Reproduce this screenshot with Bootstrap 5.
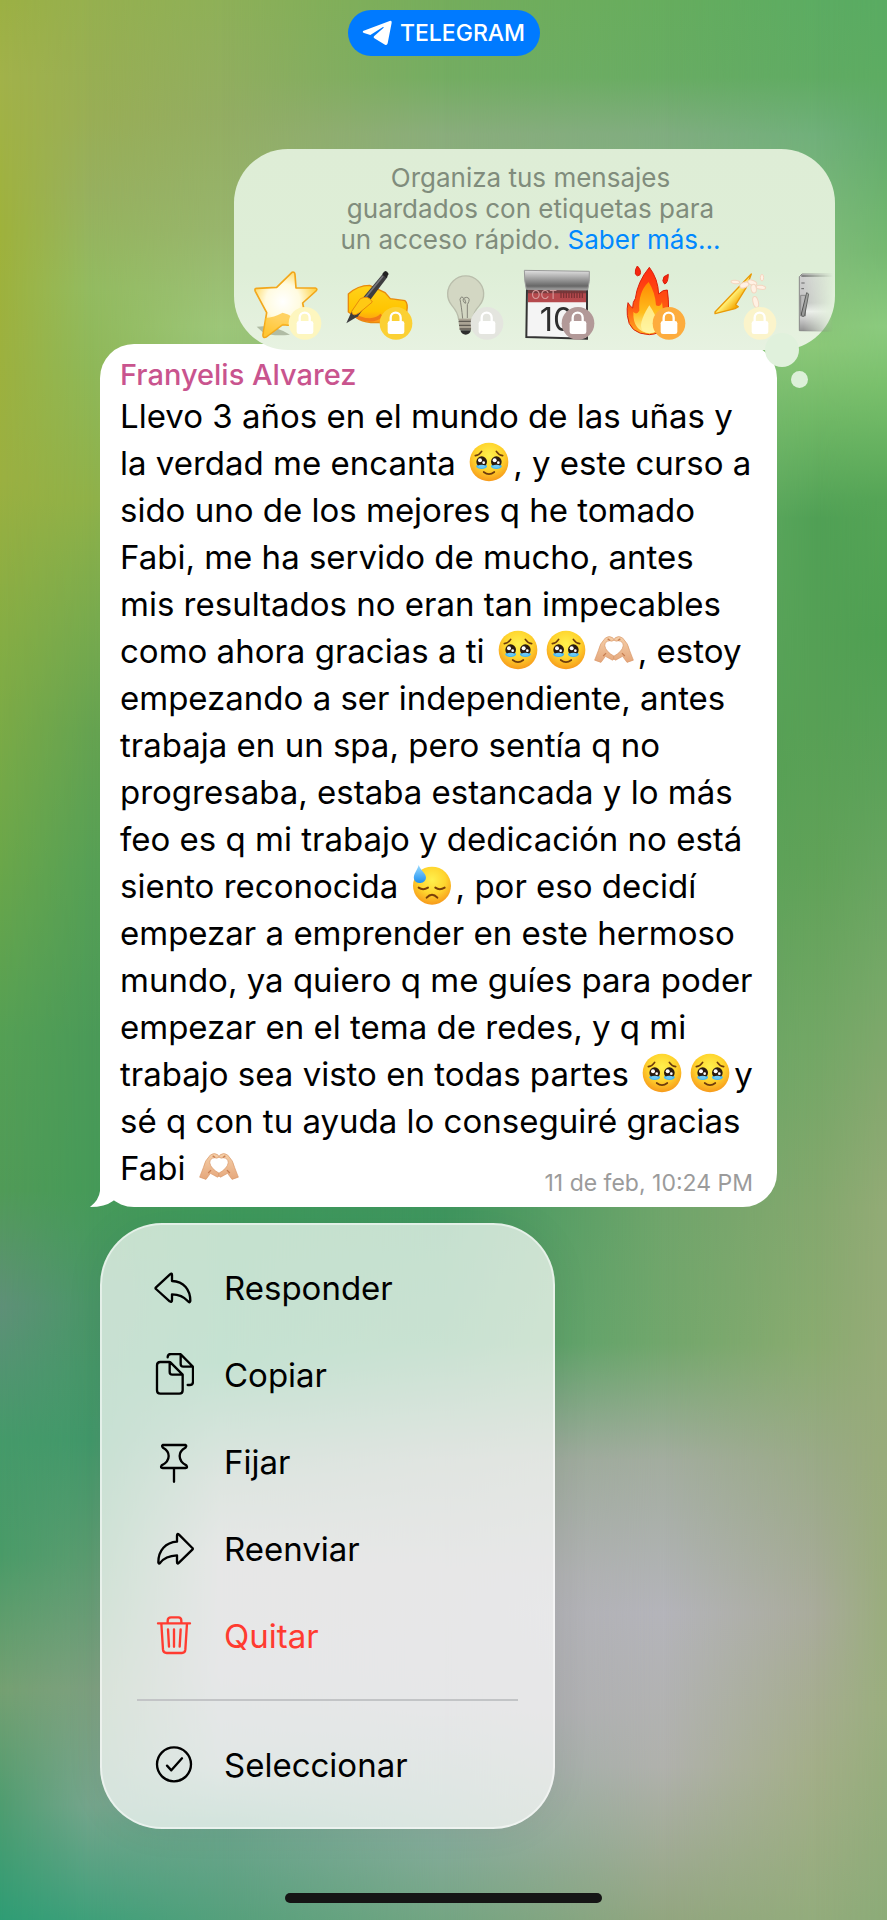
<!DOCTYPE html>
<html lang="es">
<head>
<meta charset="utf-8">
<meta name="viewport" content="width=device-width, initial-scale=1">
<title>Telegram</title>
<link href="https://cdn.jsdelivr.net/npm/bootstrap@5.3.0/dist/css/bootstrap.min.css" rel="stylesheet">
<style>
  body { font-family: Inter, "Liberation Sans", sans-serif; color: #000; background: #55a055; }
  .screen { z-index: 0; }
  /* Blurred wallpaper: vertical gradients cross-faded from left to right */
  .wall { z-index: -1; }
  .wall div { position: absolute; inset: 0; }
  .w0 { background: linear-gradient(#9cb044 0%, #a2b24a 4%, #9fb23c 12%, #9bb041 25%, #86ad44 33%, #6ba74a 45%, #55a055 54%, #519b58 62%, #5f9078 68%, #459a6a 75%, #4a9b68 81%, #75a072 88%, #4f9d70 94%, #2f9d75 100%); }
  .w1 { background: linear-gradient(#96b04f 0%, #99ae55 6%, #97b05e 10%, #93bb60 15%, #8fb858 19%, #90b148 26%, #7aab4d 32%, #66a350 38%, #57a055 45%, #4b9a58 54%, #469a58 62%, #4b9668 68%, #42986a 75%, #5a9c70 81%, #7da07f 88%, #75a58c 94%, #3fa07a 100%);
        -webkit-mask-image: linear-gradient(to right, transparent 0%, #000 10%); }
  .w2 { background: linear-gradient(#8eb058 0%, #93ad62 6%, #98b56c 12%, #9dc679 17%, #57a055 40%, #3f9a5c 63%, #3f9e6a 71%, #8fa898 77%, #adb0ae 81%, #acaeb2 87%, #9cb0aa 92%, #6ca58d 95%, #55a07c 100%);
        -webkit-mask-image: linear-gradient(to right, transparent 10%, #000 25%); }
  .w3 { background: linear-gradient(#75ad5c 0%, #74ad62 4%, #8aad7c 7%, #8ab878 17%, #57a055 40%, #3f975f 63%, #4b9d68 70%, #98a79a 76%, #afafb0 82%, #acadb2 89%, #84ab99 96%, #74a583 100%);
        -webkit-mask-image: linear-gradient(to right, transparent 25%, #000 50%); }
  .w4 { background: linear-gradient(#66ad5e 0%, #68ac63 4%, #80ad80 7%, #86c07a 17%, #50a055 40%, #70a56b 63%, #72a76c 70%, #a3ad9f 76%, #b4b4ba 84%, #b0b1ac 92%, #93a680 100%);
        -webkit-mask-image: linear-gradient(to right, transparent 50%, #000 75%); }
  .w5 { background: linear-gradient(#5cac62 0%, #60ab63 4%, #70b07a 7%, #86c07a 15%, #8bc878 18%, #6fb765 22%, #50a055 27%, #58a055 38%, #60a258 45%, #72a765 54%, #84a86e 63%, #8aab70 70%, #9aaa87 76%, #a9ab9b 84%, #a3ae88 92%, #93ac7c 100%);
        -webkit-mask-image: linear-gradient(to right, transparent 75%, #000 92%); }
  .w6 { background: linear-gradient(#59ab62 0%, #5dac62 4%, #63ac6c 7%, #74b870 13%, #8bca7e 17%, #7ac06c 20%, #55a556 26%, #4fa052 33%, #5da25a 41%, #76a868 51%, #86a86f 57%, #93ab76 63%, #98ab7a 76%, #9aae7e 89%, #8cab78 100%);
        -webkit-mask-image: linear-gradient(to right, transparent 92%, #000 100%); }

  .app-pill { margin-top: 10px; height: 46px; width: 192px; background: #007aff; font-size: 23px; font-weight: 500; line-height: 46px; }
  .tags-popup { margin: 93px 52px -6px 234px; padding: 13px 2px 8px 10px; border-radius: 54px; z-index: 2;
    background: linear-gradient(#deedd6, #deeed7 60%, #e7f2e1); }
  .tags-popup p { padding-right: 16px; font-size: 26px; line-height: 31px; color: #808c7c; }
  .tags-popup a { color: #08f; }
  .tag-row { margin-top: 7px; -webkit-mask-image: linear-gradient(to right, #000 95%, transparent 100%); }
  .tag-btn { width: 91px; height: 80px; }
  .tag-btn svg { width: 91px; height: 80px; display: block; }
  .thought { width: 34px; height: 34px; right: 36px; bottom: -17px; background: #e0f1dc; }
  .thought-dot { width: 17px; height: 17px; right: 27px; bottom: -38px; background: #dcf0d8; }

  .bubble { margin: 0 110px 0 100px; padding: 12px 20px 15px 20px; border-radius: 34px; background: #fff; z-index: 1; }
  .sender { font-size: 29px; line-height: 37px; font-weight: 500; color: #c9548e; }
  .msg { font-size: 33px; line-height: 47px; white-space: nowrap; }
  .emo { width: 40px; height: 40px; margin: 0 4px; vertical-align: -7px; }
  .stamp { right: 24px; bottom: 9px; font-size: 23px; line-height: 30px; color: #9b9b9b; }
  .tail { left: -10px; bottom: 0; width: 40px; height: 34px; }

  .actions { margin: 16px 0 0 100px; width: 455px; padding: 19px 0; border: 2px solid rgba(255,255,255,.5); border-radius: 62px; background: rgba(255,255,255,.7); box-shadow: 0 0 40px rgba(0,0,0,.06); }
  .actions button { height: 87px; padding: 0 0 0 52px; gap: 30px; font-size: 33px; line-height: 44px; color: #000; }
  .actions button.danger { color: #ff3b30; }
  .actions svg { width: 40px; height: 44px; fill: none; stroke: currentColor; stroke-width: 7; stroke-linecap: round; stroke-linejoin: round; }
  .actions hr { margin: 20px 35px; border-top: 2px solid #c2c4c6; opacity: 1; }
  .home-bar { width: 317px; height: 10px; margin-bottom: 17px; background: #151515; }
</style>
</head>
<body>
<svg width="0" height="0" class="position-absolute" aria-hidden="true">
  <defs>
    <radialGradient id="faceFill" cx=".5" cy=".35" r=".65"><stop offset="0" stop-color="#fff04d"/><stop offset=".55" stop-color="#ffd52e"/><stop offset="1" stop-color="#f79a1b"/></radialGradient>
    <linearGradient id="tear" x2="0" y2="1"><stop offset="0" stop-color="#9adcff"/><stop offset="1" stop-color="#1d8ff0"/></linearGradient>
    <linearGradient id="skin" x2="0" y2="1"><stop offset="0" stop-color="#f5cfa8"/><stop offset="1" stop-color="#e5a77c"/></linearGradient>
    <radialGradient id="starFill" cx=".45" cy=".45" r=".55"><stop offset="0" stop-color="#fff"/><stop offset=".5" stop-color="#fffbe0"/><stop offset="1" stop-color="#ffd34a"/></radialGradient>
    <linearGradient id="handFill" x2="0" y2="1"><stop offset="0" stop-color="#ffd21a"/><stop offset=".7" stop-color="#ffc400"/><stop offset="1" stop-color="#ff9418"/></linearGradient>
    <linearGradient id="metal" x2="0" y2="1"><stop offset="0" stop-color="#e2e2e2"/><stop offset=".25" stop-color="#bbb"/><stop offset=".8" stop-color="#666"/><stop offset="1" stop-color="#aaa"/></linearGradient>
    <linearGradient id="flameOut" x2="0" y2="1"><stop offset="0" stop-color="#ff2b12"/><stop offset=".6" stop-color="#ff5a12"/><stop offset="1" stop-color="#ffb020"/></linearGradient>
    <linearGradient id="flameIn" x2="0" y2="1"><stop offset="0" stop-color="#ff8a00"/><stop offset=".6" stop-color="#ffbe1e"/><stop offset="1" stop-color="#fff6a0"/></linearGradient>
    <linearGradient id="cone" x2="1" y2="1"><stop offset=".3" stop-color="#ff9d00"/><stop offset=".5" stop-color="#fff27a"/><stop offset=".7" stop-color="#f5a800"/></linearGradient>
    <linearGradient id="cabinet" x2="0" y2="1"><stop offset="0" stop-color="#d0d0d0"/><stop offset=".5" stop-color="#c4c4c4"/><stop offset=".65" stop-color="#eee"/><stop offset="1" stop-color="#8e8e8e"/></linearGradient>
    <symbol id="lock" viewBox="0 0 98 98"><rect x="24" y="42" width="50" height="39" rx="7" fill="#fff"/><path d="M33 45V32a15 15 0 0 1 30 0v13" fill="none" stroke="#fff" stroke-width="7"/></symbol>
    <symbol id="tearful" viewBox="0 0 120 120">
      <circle cx="60" cy="60" r="58" fill="url(#faceFill)"/>
      <ellipse cx="38" cy="73" rx="16" ry="8" fill="#45b9f5"/><ellipse cx="82" cy="73" rx="16" ry="8" fill="#45b9f5"/>
      <circle cx="38" cy="59" r="16" fill="#2a1a10"/><circle cx="82" cy="59" r="16" fill="#2a1a10"/>
      <path d="M25 71q13-6 26 0q-3 7-13 7t-13-7zM69 71q13-6 26 0q-3 7-13 7t-13-7z" fill="#6cc9f7"/>
      <circle cx="33" cy="55" r="6" fill="#fff"/><circle cx="44" cy="62" r="4" fill="#fff"/><circle cx="77" cy="55" r="6" fill="#fff"/><circle cx="88" cy="62" r="4" fill="#fff"/>
      <path d="M19 41Q31 39 38 28M101 41Q89 39 82 28M44 90q16 13 32 0" fill="none" stroke="#6e3c0c" stroke-width="5" stroke-linecap="round"/>
    </symbol>
    <symbol id="sweat" viewBox="0 0 120 120">
      <circle cx="60" cy="62" r="57" fill="url(#faceFill)"/>
      <path d="M20 68q13 9 28 0M70 68q13 9 28 0M44 98q16-18 32 0" fill="none" stroke="#7a3f08" stroke-width="6" stroke-linecap="round"/>
      <path d="M20 0C16 17 3 27 6 42Q10 55 25 54Q41 51 42 38C42 24 26 18 20 0Z" fill="url(#tear)"/>
    </symbol>
    <symbol id="hearthands" viewBox="0 0 126 120">
      <g fill="url(#skin)" stroke="#d89565" stroke-width="2" stroke-linejoin="round">
        <path d="M2 92L14 61Q17 41 36 22Q48 13 60 22L63 29Q57 34 49 31Q34 32 34 47Q37 65 64 80Q67 90 58 92L36 80L22 99Z"/>
        <path d="M124 92L112 61Q109 41 90 22Q78 13 66 22L63 29Q69 34 77 31Q92 32 92 47Q89 65 62 80Q59 90 68 92L90 80L104 99Z"/>
      </g>
      <path d="M29 79L38 70M97 79L88 70M43 25l8 5M83 25l-8 5" stroke="#c87f52" stroke-width="4"/>
    </symbol>
  </defs>
</svg>

<div class="screen position-relative min-vh-100 d-flex flex-column">
  <div class="wall position-absolute top-0 start-0 w-100 h-100" aria-hidden="true">
    <div class="w0"></div><div class="w1"></div><div class="w2"></div><div class="w3"></div><div class="w4"></div><div class="w5"></div><div class="w6"></div>
  </div>

  <header class="app-pill rounded-pill align-self-center d-flex align-items-center justify-content-center text-white">
    <svg width="30" height="26" viewBox="0 0 90 76" class="me-2" aria-hidden="true"><path d="M3 32Q0 36 6 38L25 44L63 20Q67 19 64 23L36 48Q33 51 37 54L69 73Q75 76 77 69L89 7Q90 0 83 2Z" fill="#fff"/></svg>
    <span>TELEGRAM</span>
  </header>

  <section class="tags-popup position-relative">
    <p class="text-center mb-0">Organiza tus mensajes<br>guardados con etiquetas para<br>un acceso rápido. <a href="#" class="text-decoration-none">Saber más...</a></p>
    <div class="tag-row d-flex overflow-hidden">
      <button type="button" class="tag-btn btn p-0 border-0 flex-shrink-0" aria-label="Estrella">
        <svg viewBox="0 0 273 240"><path d="M38 194q50-8 100 24q-50 6-80-6z" fill="#9aa58c" opacity=".7"/><path d="M144 31Q152 28 153 38L156 78L214 78Q222 80 216 87L176 123L190 195L116 188L68 224Q56 230 57 218L68 152L34 88Q30 78 40 79L98 76Z" fill="url(#starFill)" stroke="#f2a71b" stroke-width="5" stroke-linejoin="round"/><path d="M64 168Q90 166 116 152Q150 160 170 190L116 188L68 222Q58 226 60 216Z" fill="#ffc02a" opacity=".7"/><circle cx="183" cy="184" r="49" fill="#fdf6bf"/><use href="#lock" x="134" y="135" width="98" height="98"/></svg></button>
      <button type="button" class="tag-btn btn p-0 border-0 flex-shrink-0" aria-label="Escribir">
        <svg viewBox="0 0 273 240"><path d="M40 96Q68 70 104 70L150 92L166 110L210 116Q220 124 215 150L150 180Q100 186 72 172L40 150Z" fill="url(#handFill)" stroke="#e88a0c" stroke-width="4"/><path d="M66 165q50 20 74-6" fill="none" stroke="#f07a18" stroke-width="10"/><path d="M145 34L50 148L34 184L69 163L158 44Z" fill="#3d3d40"/><path d="M142 36Q152 18 161 36L154 48" fill="#222"/><path d="M144 42L66 138" stroke="#77777b" stroke-width="5"/><path d="M76 110Q100 98 112 120L76 150Q52 168 50 148Z" fill="#ffc914" stroke="#e88a0c" stroke-width="3"/><circle cx="183" cy="184" r="49" fill="#fbd034"/><use href="#lock" x="134" y="135" width="98" height="98"/></svg></button>
      <button type="button" class="tag-btn btn p-0 border-0 flex-shrink-0" aria-label="Bombilla">
        <svg viewBox="0 0 273 240"><path d="M98 172Q96 152 78 131A54 54 0 1 1 160 131Q141 152 140 172Z" fill="#d3d7c3" stroke="#b9bdab" stroke-width="4"/><path d="M110 170Q106 130 102 112Q106 98 116 112Q124 130 114 121Q106 108 122 106Q136 108 124 128V168" fill="none" stroke="#85857a" stroke-width="3"/><path d="M98 170h41v12l-4 22h-34l-3-22z" fill="#aaa394"/><path d="M98 178h40M99 190h38M101 201h34" stroke="#5f5b53" stroke-width="4"/><path d="M103 205h32q-4 13-16 13t-16-13z" fill="#2d2d2d"/><circle cx="183" cy="184" r="49" fill="#e4e5df"/><use href="#lock" x="134" y="135" width="98" height="98"/></svg></button>
      <button type="button" class="tag-btn btn p-0 border-0 flex-shrink-0" aria-label="Calendario">
        <svg viewBox="0 0 273 240"><path d="M30 80H210V230L28 225Z" fill="#f4f4f4" stroke="#333" stroke-width="6"/><path d="M33 82H207V121H33Z" fill="#b5494d"/><path d="M33 82H207V94H33Z" fill="#733c3e"/><text x="43" y="110" font-size="36" fill="#d69a9a">OCT</text><path d="M130 98h70" stroke="#7d3235" stroke-width="20" stroke-dasharray="4 4"/><text x="68" y="207" font-size="98" fill="#2e2e2e">10</text><path d="M22 25L217 28Q219 60 212 84L28 82Q22 60 22 25Z" fill="url(#metal)" stroke="#999" stroke-width="3"/><circle cx="183" cy="184" r="49" fill="#b29998"/><use href="#lock" x="134" y="135" width="98" height="98"/></svg></button>
      <button type="button" class="tag-btn btn p-0 border-0 flex-shrink-0" aria-label="Fuego">
        <svg viewBox="0 0 273 240"><g stroke="#d9200c" stroke-width="3"><path d="M124 16Q150 50 152 96Q166 82 178 84Q182 110 182 150Q184 214 124 218Q62 216 58 160Q56 140 60 122Q66 134 74 138Q74 118 82 110Q88 60 124 16Z" fill="url(#flameOut)"/><path d="M88 12Q102 26 96 38Q88 46 82 36Q80 22 88 12ZM181 37Q180 64 170 66Q160 58 168 44Z" fill="#f5260f"/></g><path d="M122 60Q142 92 144 130Q158 136 162 120Q176 210 124 214Q74 208 76 150Q86 160 94 146Q90 90 122 60Z" fill="url(#flameIn)"/><path d="M124 130Q158 180 146 208Q124 220 106 208Q86 190 124 130Z" fill="#fff6a6" opacity=".8"/><circle cx="183" cy="184" r="49" fill="#fdac3e"/><use href="#lock" x="134" y="135" width="98" height="98"/></svg></button>
      <button type="button" class="tag-btn btn p-0 border-0 flex-shrink-0" aria-label="Fiesta">
        <svg viewBox="0 0 273 240"><path d="M48 150L157 36L142 76L110 128L118 134L108 140L48 155Z" fill="url(#cone)" stroke="#e99a08" stroke-width="4" stroke-linejoin="round"/><g fill="#fff1e4" stroke="#f3d6c0" stroke-width="3"><ellipse cx="109" cy="60" rx="13" ry="5" transform="rotate(8 109 60)"/><ellipse cx="136" cy="69" rx="14" ry="8" transform="rotate(-20 136 69)"/><ellipse cx="160" cy="62" rx="14" ry="7" transform="rotate(20 160 62)"/><ellipse cx="189" cy="47" rx="5" ry="10"/><ellipse cx="186" cy="76" rx="14" ry="6" transform="rotate(8 186 76)"/><ellipse cx="164" cy="80" rx="8" ry="13" transform="rotate(-10 164 80)"/><ellipse cx="170" cy="120" rx="8" ry="17" transform="rotate(-14 170 120)"/></g><circle cx="183" cy="184" r="49" fill="#fbf4cb"/><use href="#lock" x="134" y="135" width="98" height="98"/></svg></button>
      <button type="button" class="tag-btn btn p-0 border-0 flex-shrink-0" aria-label="Archivador">
        <svg viewBox="0 0 273 240"><path d="M28 44L36 36H240V209L28 206Z" fill="url(#cabinet)" stroke="#888" stroke-width="3"/><path d="M34 42H240" stroke="#6b6b6b" stroke-width="5"/><path d="M34 63h10M34 80h8" stroke="#666" stroke-width="3"/><path d="M32 100h14v62H32z" fill="#bbb" stroke="#888" stroke-width="3"/><path d="M50 92L34 156Q36 168 44 160L56 96Z" fill="#999" stroke="#555" stroke-width="3"/></svg></button>
    </div>
    <span class="thought position-absolute rounded-circle"></span>
    <span class="thought-dot position-absolute rounded-circle"></span>
  </section>

  <article class="bubble position-relative">
    <div class="sender">Franyelis Alvarez</div>
    <p class="msg mb-0">Llevo 3 años en el mundo de las uñas y<br>
la verdad me encanta <svg class="emo"><use href="#tearful"/></svg>, y este curso a<br>
sido uno de los mejores q he tomado<br>
Fabi, me ha servido de mucho, antes<br>
mis resultados no eran tan impecables<br>
como ahora gracias a ti <svg class="emo"><use href="#tearful"/></svg><svg class="emo"><use href="#tearful"/></svg><svg class="emo"><use href="#hearthands"/></svg>, estoy<br>
empezando a ser independiente, antes<br>
trabaja en un spa, pero sentía q no<br>
progresaba, estaba estancada y lo más<br>
feo es q mi trabajo y dedicación no está<br>
siento reconocida <svg class="emo"><use href="#sweat"/></svg>, por eso decidí<br>
empezar a emprender en este hermoso<br>
mundo, ya quiero q me guíes para poder<br>
empezar en el tema de redes, y q mi<br>
trabajo sea visto en todas partes <svg class="emo"><use href="#tearful"/></svg><svg class="emo"><use href="#tearful"/></svg>y<br>
sé q con tu ayuda lo conseguiré gracias<br>
Fabi <svg class="emo"><use href="#hearthands"/></svg></p>
    <time class="stamp position-absolute">11 de feb, 10:24 PM</time>
    <svg class="tail position-absolute" viewBox="0 0 40 34" aria-hidden="true"><path d="M10 0V18Q9 27 0 34Q15 34 23 28L28 24V0Z" fill="#fff"/></svg>
  </article>

  <nav class="actions d-flex flex-column" aria-label="Acciones del mensaje">
    <button type="button" class="btn border-0 rounded-0 d-flex align-items-center"><svg viewBox="0 0 120 132"><path d="M6 64L48 25Q54 20 54 27V45C90 46 109 72 109 105Q107 112 102 106C90 92 75 85 54 85V102Q54 110 47 106L6 69Q3 67 6 64Z"/></svg>Responder</button>
    <button type="button" class="btn border-0 rounded-0 d-flex align-items-center"><svg viewBox="0 0 120 132"><path d="M46 27H19Q9 27 9 37V112Q9 122 19 122H76Q86 122 86 112V65L50 29Q48 27 46 27ZM47 29V57Q47 65 55 65H84M41 13Q41 3 51 3H77Q79 3 81 5L115 39Q117 41 117 43V86Q117 96 107 96H101M80 5V33Q80 41 88 41H115"/></svg>Copiar</button>
    <button type="button" class="btn border-0 rounded-0 d-flex align-items-center"><svg viewBox="0 0 120 132"><path d="M26 15H95Q99 17 94 23Q77 32 77 48Q77 66 97 76Q102 84 95 84H26Q18 84 23 76Q44 66 44 48Q44 32 27 23Q22 17 26 15ZM60 84V125"/></svg>Fijar</button>
    <button type="button" class="btn border-0 rounded-0 d-flex align-items-center"><svg viewBox="0 0 120 132"><path d="M115 63L75 23Q69 18 69 26V44C35 46 13 70 13 106Q14 113 19 107C30 92 50 86 69 85V105Q69 113 75 107L115 68Q118 65 115 63Z"/></svg>Reenviar</button>
    <button type="button" class="danger btn border-0 rounded-0 d-flex align-items-center"><svg viewBox="0 0 120 132"><path d="M12 28H108M41 28V20Q41 10 51 10H73Q82 10 82 20V28M22 28L27 107Q28 117 38 117H84Q93 117 94 107L99 28M42 46L45 98M60 46V98M80 46L77 98"/></svg>Quitar</button>
    <hr>
    <button type="button" class="btn border-0 rounded-0 d-flex align-items-center"><svg viewBox="0 0 120 132"><circle cx="60" cy="64" r="51"/><path d="M39 68L52 82L84 46"/></svg>Seleccionar</button>
  </nav>

  <div class="home-bar rounded-pill align-self-center mt-auto"></div>
</div>
<script src="https://cdn.jsdelivr.net/npm/bootstrap@5.3.0/dist/js/bootstrap.bundle.min.js"></script>
</body>
</html>
